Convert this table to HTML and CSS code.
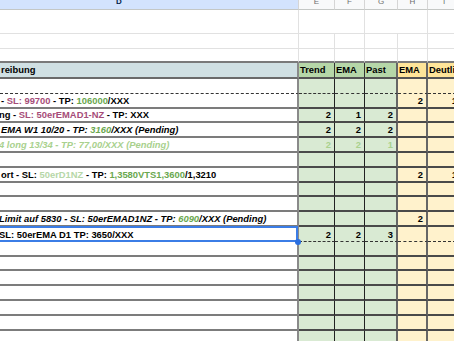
FILE: index.html
```html
<!DOCTYPE html>
<html>
<head>
<meta charset="utf-8">
<link rel="stylesheet" href="styles.css">
</head>
<body>
<div class="sheet">
  <div class="row colhead">
    <div class="c d selcol"><span>D</span></div>
    <div class="c">E</div>
    <div class="c">F</div>
    <div class="c">G</div>
    <div class="c">H</div>
    <div class="c">I</div>
  </div>
  <div class="row top tall">
    <div class="c d"></div>
    <div class="c span2"></div>
    <div class="c span2"></div>
    <div class="c"></div>
  </div>
  <div class="row top">
    <div class="c d"></div><div class="c"></div><div class="c"></div><div class="c"></div><div class="c"></div><div class="c"></div>
  </div>
  <div class="row top last">
    <div class="c d"></div><div class="c"></div><div class="c"></div><div class="c"></div><div class="c"></div><div class="c"></div>
  </div>
  <div class="row head">
    <div class="c d"><span>reibung</span></div>
    <div class="c g"><span>Trend</span></div>
    <div class="c g"><span>EMA</span></div>
    <div class="c g g3"><span>Past</span></div>
    <div class="c y y1"><span>EMA</span></div>
    <div class="c y"><span>Deutlich</span></div>
  </div>
  <div class="row b dash">
    <div class="c d"></div><div class="c g"></div><div class="c g"></div><div class="c g g3"></div><div class="c y y1"></div><div class="c y"></div>
  </div>
  <div class="row b">
    <div class="c d"><span class="t">- <span class="pu">SL: 99700</span> - TP: <span class="gr">106000</span>/XXX</span></div>
    <div class="c g"></div><div class="c g"></div><div class="c g g3"></div><div class="c y y1 n">2</div><div class="c y n">1</div>
  </div>
  <div class="row b">
    <div class="c d"><span class="t cut">ng - <span class="pu">SL: 50erEMAD1-NZ</span> - TP: XXX</span></div>
    <div class="c g n">2</div><div class="c g n">1</div><div class="c g g3 n">2</div><div class="c y y1"></div><div class="c y"></div>
  </div>
  <div class="row b it">
    <div class="c d"><span class="t">EMA W1 10/20 - TP: <span class="gr">3160</span>/XXX (Pending)</span></div>
    <div class="c g n">2</div><div class="c g n">2</div><div class="c g g3 n">2</div><div class="c y y1"></div><div class="c y"></div>
  </div>
  <div class="row b it lg">
    <div class="c d"><span class="t cut">4 long 13/34 - TP: 77,00/XXX (Pending)</span></div>
    <div class="c g n">2</div><div class="c g n">2</div><div class="c g g3 n">1</div><div class="c y y1"></div><div class="c y"></div>
  </div>
  <div class="row b">
    <div class="c d"></div><div class="c g"></div><div class="c g"></div><div class="c g g3"></div><div class="c y y1"></div><div class="c y"></div>
  </div>
  <div class="row b">
    <div class="c d"><span class="t">ort - SL: <span class="lgt">50erD1NZ</span> - TP: <span class="gr">1,3580VTS1,3600</span>/1,3210</span></div>
    <div class="c g"></div><div class="c g"></div><div class="c g g3"></div><div class="c y y1 n">2</div><div class="c y n">1</div>
  </div>
  <div class="row b">
    <div class="c d"></div><div class="c g"></div><div class="c g"></div><div class="c g g3"></div><div class="c y y1"></div><div class="c y"></div>
  </div>
  <div class="row b">
    <div class="c d"></div><div class="c g"></div><div class="c g"></div><div class="c g g3"></div><div class="c y y1"></div><div class="c y"></div>
  </div>
  <div class="row b it">
    <div class="c d"><span class="t cut">Limit auf 5830 - SL: 50erEMAD1NZ - TP: <span class="gr">6090</span>/XXX (Pending)</span></div>
    <div class="c g"></div><div class="c g"></div><div class="c g g3"></div><div class="c y y1 n">2</div><div class="c y"></div>
  </div>
  <div class="row b dash">
    <div class="c d sel"><span class="t cut">SL: 50erEMA D1 TP: 3650/XXX</span></div>
    <div class="c g n">2</div><div class="c g n">2</div><div class="c g g3 n">3</div><div class="c y y1"></div><div class="c y"></div>
  </div>
  <div class="row b">
    <div class="c d"></div><div class="c g"></div><div class="c g"></div><div class="c g g3"></div><div class="c y y1"></div><div class="c y"></div>
  </div>
  <div class="row b">
    <div class="c d"></div><div class="c g"></div><div class="c g"></div><div class="c g g3"></div><div class="c y y1"></div><div class="c y"></div>
  </div>
  <div class="row b">
    <div class="c d"></div><div class="c g"></div><div class="c g"></div><div class="c g g3"></div><div class="c y y1"></div><div class="c y"></div>
  </div>
  <div class="row b">
    <div class="c d"></div><div class="c g"></div><div class="c g"></div><div class="c g g3"></div><div class="c y y1"></div><div class="c y"></div>
  </div>
  <div class="row b">
    <div class="c d"></div><div class="c g"></div><div class="c g"></div><div class="c g g3"></div><div class="c y y1"></div><div class="c y"></div>
  </div>
  <div class="row b">
    <div class="c d"></div><div class="c g"></div><div class="c g"></div><div class="c g g3"></div><div class="c y y1"></div><div class="c y"></div>
  </div>
  <div class="row b">
    <div class="c d"></div><div class="c g"></div><div class="c g"></div><div class="c g g3"></div><div class="c y y1"></div><div class="c y"></div>
  </div>
</div>
</body>
</html>
```
FILE: styles.css
```css
html, body {
  margin: 0;
  padding: 0;
  background: #ffffff;
  overflow: hidden;
}
body {
  width: 454px;
  height: 341px;
  font-family: "Liberation Sans", Arial, sans-serif;
  font-size: 9.4px;
  font-weight: bold;
  color: #000;
}
.sheet {
  width: 461px;
  margin-top: -6px;
}
.row {
  display: grid;
  grid-template-columns: 299px 36px 30px 33px 30px 33px;
}
.c {
  box-sizing: border-box;
  overflow: hidden;
  white-space: nowrap;
  display: flex;
  align-items: flex-end;
  padding: 0 0 1px 1px;
  line-height: 11px;
  border-right: 1px solid #e1e1e1;
  border-bottom: 1px solid #e1e1e1;
}
.span2 { grid-column: span 2; }

/* column letters */
.colhead {
  height: 16px;
  background: #f8f9fa;
}
.colhead .c {
  align-items: center;
  justify-content: center;
  padding: 0;
  font-size: 8px;
  font-weight: normal;
  color: #6f6f6f;
  border-right: 1px solid #d5d5d5;
  border-bottom: 1px solid #c4c7c5;
}
.colhead .selcol {
  background: #d3e3fd;
  color: #041e49;
  font-weight: bold;
  padding-right: 60px;
}

/* blank rows above the table */
.top { height: 15px; }
.top.tall { height: 24px; }
.top.last { height: 14px; }
.top.last .c {
  border-bottom: 2px solid #7a7a7a;
}

/* header row */
.head { height: 16px; }
.head .c {
  padding-bottom: 2px;
  border-bottom: 2px solid #555;
  border-right: 1px solid #333;
}
.head .d {
  background: #d0e0e3;
  border-right: 2px solid #8a8a8a;
  border-bottom-color: #6a6a6a;
}

/* body rows */
.b { height: 14.8px; }
.b .c {
  border-bottom: 2px solid #4a4a4a;
  border-right: 1px solid #222;
}
.b .d {
  border-right: 2px solid #8a8a8a;
  border-bottom: 2px solid #7c7c7c;
}
.g { background: #d9ead3; }
.y { background: #fff2cc; }
.head .g { background: #b6d7a8; }
.head .y { background: #ffe599; }
.c.g3 { border-right: 2px solid #666; }
.c.y1 { border-right: 2px solid #666; }

.b.dash .c {
  border-bottom: 1px dashed #333;
}

.n {
  justify-content: flex-end;
  padding-right: 3px;
}
.it .d { font-style: italic; }
.lg .c { color: #a9d18e; }
.pu { color: #a64d79; }
.gr { color: #6aa84f; }
.lgt { color: #b6d7a8; }
.cut { margin-left: -2px; }

/* selected cell */
.sel {
  position: relative;
  overflow: visible;
}
.sel::before {
  content: "";
  position: absolute;
  left: -4px;
  right: -1px;
  top: -1px;
  bottom: -1px;
  border: 2px solid #3b7de6;
  pointer-events: none;
}
.sel::after {
  content: "";
  position: absolute;
  right: -4px;
  bottom: -4px;
  width: 6px;
  height: 6px;
  border-radius: 50%;
  background: #2a6fe0;
  z-index: 2;
}
```
